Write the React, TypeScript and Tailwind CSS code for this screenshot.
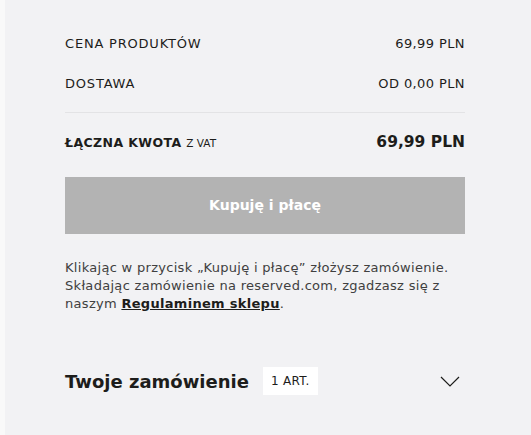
const App = () => {
  return (
    <div className="w-[531px] h-[435px] bg-[#f9f9f9] pl-[5px]" style={{ fontFamily: '"DejaVu Sans", "Open Sans", sans-serif' }}>
      <div className="h-full bg-[#f2f2f4] pl-[60px] pr-[66px] pt-[34px]">
        <div className="flex justify-between items-center h-[20px] text-[13px] text-[#1d1d1b]">
          <span className="tracking-[0.8px]">CENA PRODUKTÓW</span>
          <span className="tracking-[0.4px]">69,99 PLN</span>
        </div>
        <div className="flex justify-between items-center h-[20px] mt-[20px] text-[13px] text-[#1d1d1b]">
          <span className="tracking-[0.8px]">DOSTAWA</span>
          <span className="tracking-[0.4px]">OD 0,00 PLN</span>
        </div>
        <div className="h-px bg-[#e3e3e5] mt-[18px]" />
        <div className="flex justify-between items-center h-[20px] mt-[20px] text-[#1d1d1b]">
          <span className="text-[12.5px] font-bold tracking-[0.4px]">
            ŁĄCZNA KWOTA <span className="text-[10.5px] font-normal tracking-normal">Z VAT</span>
          </span>
          <span className="text-[15.5px] font-bold">69,99 PLN</span>
        </div>
        <button className="w-full h-[57px] mt-[24px] bg-[#b3b3b3] text-white text-[14px] font-bold">
          Kupuję i płacę
        </button>
        <p className="mt-[25px] text-[13px] leading-[18px] text-[#404040] tracking-[0.3px]">
          Klikając w przycisk „Kupuję i płacę” złożysz zamówienie. Składając zamówienie na reserved.com, zgadzasz się z naszym{" "}
          <a className="font-bold text-[#1d1d1b] underline">Regulaminem sklepu</a>.
        </p>
        <div className="flex items-center justify-between mt-[54px]">
          <div className="flex items-center gap-[14px]">
            <span className="text-[18px] font-bold text-[#1d1d1b]">Twoje zamówienie</span>
            <span className="bg-white px-[8px] h-[28px] flex items-center text-[12px] text-[#1d1d1b] tracking-[0.3px]">1 ART.</span>
          </div>
          <svg width="20" height="11" viewBox="0 0 20 11" className="mr-[5px]">
            <path d="M1 1 L10 10 L19 1" fill="none" stroke="#1d1d1b" strokeWidth="1.2" />
          </svg>
        </div>
      </div>
    </div>
  );
};

export default App;
